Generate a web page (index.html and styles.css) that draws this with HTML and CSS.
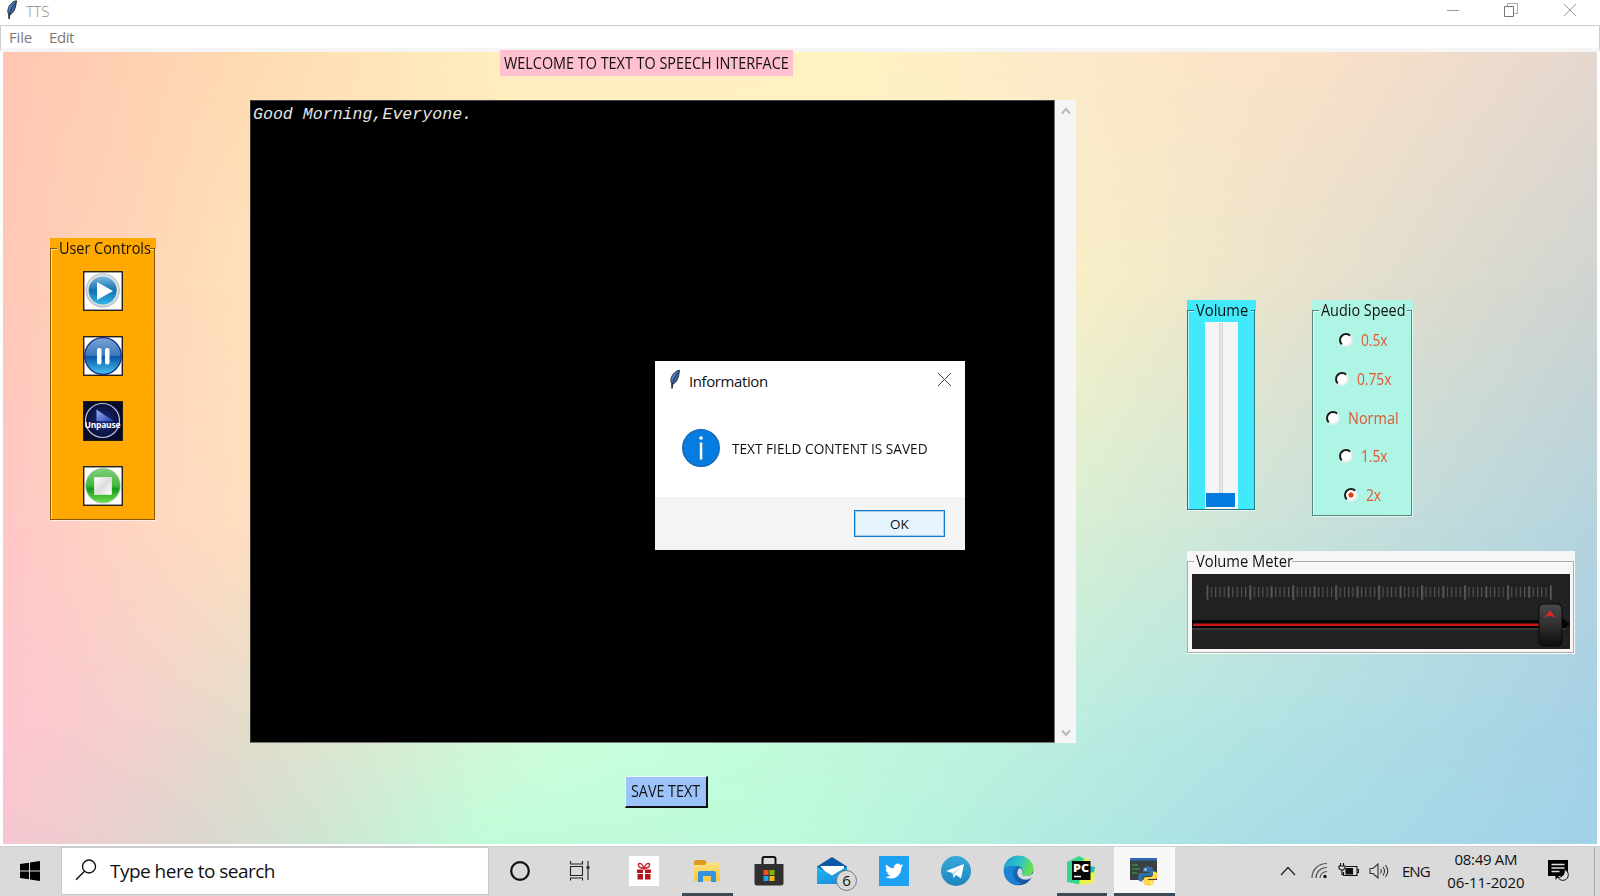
FILE: index.html
```html
<!DOCTYPE html>
<html lang="en">
<head>
<meta charset="utf-8">
<title>TTS</title>
<link rel="stylesheet" href="styles.css">
</head>
<body>
<svg class="defs" width="0" height="0">
  <defs>
    <linearGradient id="feather" x1="0" y1="0" x2="1" y2="1"><stop offset="0" stop-color="#7fb0e8"/><stop offset=".5" stop-color="#3d6ba8"/><stop offset="1" stop-color="#16263f"/></linearGradient>
    <linearGradient id="blueBtn" x1="0" y1="0" x2="0" y2="1"><stop offset="0" stop-color="#7db8dc"/><stop offset=".5" stop-color="#1272b4"/><stop offset="1" stop-color="#33b5e6"/></linearGradient>
    <linearGradient id="pauseBtn" x1="0" y1="0" x2="0" y2="1"><stop offset="0" stop-color="#7ba6d8"/><stop offset=".48" stop-color="#3c78bb"/><stop offset=".52" stop-color="#0c57a4"/><stop offset="1" stop-color="#43c6f2"/></linearGradient>
    <linearGradient id="stopBtn" x1="0" y1="0" x2="0" y2="1"><stop offset="0" stop-color="#7fd07c"/><stop offset=".5" stop-color="#46b83c"/><stop offset=".6" stop-color="#159a18"/><stop offset="1" stop-color="#6be04d"/></linearGradient>
    <linearGradient id="stopSq" x1="0" y1="0" x2="1" y2="1"><stop offset="0" stop-color="#fff"/><stop offset=".5" stop-color="#dcdcdc"/><stop offset="1" stop-color="#fff"/></linearGradient>
    <radialGradient id="navy"><stop offset="0" stop-color="#1b2f86"/><stop offset="1" stop-color="#070b2c"/></radialGradient>
    <linearGradient id="navyTri" x1="0" y1="0" x2="1" y2="1"><stop offset="0" stop-color="#9db4f0"/><stop offset="1" stop-color="#2344b0"/></linearGradient>
    <linearGradient id="tg" x1="0" y1="0" x2="0" y2="1"><stop offset="0" stop-color="#38a9dc"/><stop offset="1" stop-color="#1c85bd"/></linearGradient>
    <linearGradient id="edgeTop" x1="0" y1=".2" x2="1" y2=".5"><stop offset="0" stop-color="#1d9bd8"/><stop offset=".5" stop-color="#2fc3c9"/><stop offset="1" stop-color="#6be24d"/></linearGradient>
    <linearGradient id="edgeLow" x1="0" y1="0" x2="1" y2="1"><stop offset="0" stop-color="#1c86d6"/><stop offset="1" stop-color="#104a98"/></linearGradient>
    <linearGradient id="mailBody" x1="0" y1="0" x2="1" y2="1"><stop offset="0" stop-color="#25b6f0"/><stop offset="1" stop-color="#1287dc"/></linearGradient>
    <linearGradient id="folder" x1="0" y1="0" x2="0" y2="1"><stop offset="0" stop-color="#ffe187"/><stop offset="1" stop-color="#fbc638"/></linearGradient>
    <linearGradient id="knob" x1="0" y1="0" x2="0" y2="1"><stop offset="0" stop-color="#4a4a4a"/><stop offset=".5" stop-color="#303030"/><stop offset="1" stop-color="#0c0c0c"/></linearGradient>
    <pattern id="ticks" width="4.28" height="14" patternUnits="userSpaceOnUse"><rect width="1.1" height="10" y="2" fill="#555"/></pattern>
    <pattern id="bigTicks" width="42.85" height="16" patternUnits="userSpaceOnUse"><rect width="1.5" height="15" fill="#5e5e5e"/><rect x="21.4" y="1" width="1.4" height="12" fill="#5a5a5a"/></pattern>
    <symbol id="tkFeather" viewBox="0 0 12 20"><path d="M10.5.8C7 1.2 3 4.500 2 9.500c-.4 2 0 3.500.6 4.500L3 19l1-4.600C8 13 9.700 8 10.500.8z" fill="url(#feather)" stroke="#17202e" stroke-width=".9"/><path d="M9 3.500C6 6.500 4.200 10.500 3.500 15" fill="none" stroke="#1a2740" stroke-width=".9"/></symbol>
  </defs>
</svg>

<header class="titlebar">
  <svg class="title-icon" width="12" height="20"><use href="#tkFeather"/></svg>
  <span class="title-text">TTS</span>
  <div class="win-buttons">
    <svg width="14" height="14" viewBox="0 0 14 14"><path d="M1 7.500h12" stroke="#999"/></svg>
    <svg width="14" height="14" viewBox="0 0 14 14" fill="none" stroke="#777"><path d="M.5 3.500h9v10h-9z"/><path d="M3.500 3V.5h10v10H10" stroke="#aaa"/></svg>
    <svg width="14" height="14" viewBox="0 0 14 14"><path d="M1 1l12 12M13 1L1 13" stroke="#999"/></svg>
  </div>
</header>
<nav class="menubar"><span class="m-file">File</span><span class="m-edit">Edit</span></nav>

<main class="canvas">
  <div class="bg bg-1"></div><div class="bg bg-2"></div><div class="bg bg-3"></div><div class="bg bg-4"></div><div class="bg bg-5"></div>

  <section class="col-left">
    <div class="frame controls">
      <div class="frame-line"><div class="legend"><span class="t-controls">User Controls</span></div>
        <div class="buttons">
          <svg width="40" height="40" viewBox="0 0 40 40"><rect x=".75" y=".75" width="38.500" height="38.500" fill="#fff" stroke="#111" stroke-width="1.300"/><circle cx="19.700" cy="19.500" r="17.300" fill="#c4c9cd"/><circle cx="19.700" cy="19" r="15.500" fill="#dfe4e7"/><circle cx="19.700" cy="19.500" r="14" fill="url(#blueBtn)"/><path d="M14 11v18l16-9z" fill="#fff"/></svg>
          <svg width="40" height="40" viewBox="0 0 40 40"><rect x=".75" y=".75" width="38.500" height="38.500" fill="#fff" stroke="#111" stroke-width="1.300"/><circle cx="20" cy="20" r="18.300" fill="url(#pauseBtn)" stroke="#1b2d8c" stroke-width="1.300"/><rect x="14" y="12" width="4.500" height="16.500" rx="2" fill="#fff"/><rect x="22" y="12" width="4.500" height="16.500" rx="2" fill="#fff"/></svg>
          <svg width="40" height="40" viewBox="0 0 40 40"><rect x=".75" y=".75" width="38.500" height="38.500" fill="url(#navy)" stroke="#111" stroke-width="1.300"/><circle cx="19.500" cy="19.500" r="17" fill="none" stroke="#b9c0d8" stroke-width="1.200"/><path d="M13.500 8.500v11.500h17z" fill="url(#navyTri)"/><text x="1.500" y="26.500" textLength="36" class="unpause">Unpause</text></svg>
          <svg width="40" height="40" viewBox="0 0 40 40"><rect x=".75" y=".75" width="38.500" height="38.500" fill="#fff" stroke="#111" stroke-width="1.300"/><circle cx="20" cy="19.700" r="17.800" fill="#bccabc"/><circle cx="20" cy="19.500" r="17" fill="url(#stopBtn)"/><rect x="11.500" y="11.500" width="17" height="17" fill="url(#stopSq)" stroke="#eee" stroke-width=".7"/></svg>
        </div>
      </div>
    </div>
  </section>

  <section class="col-mid">
    <div class="welcome"><span class="t-welcome">WELCOME TO TEXT TO SPEECH INTERFACE</span></div>
    <div class="editor">
      <div class="text-area">Good Morning,Everyone.</div>
      <div class="scrollbar">
        <svg width="12" height="10" viewBox="0 0 12 10"><path d="M2 7.500L6 3l4 4.500" fill="none" stroke="#b9b9b9" stroke-width="2"/></svg>
        <svg width="12" height="10" viewBox="0 0 12 10"><path d="M2 2.500L6 7l4-4.500" fill="none" stroke="#b9b9b9" stroke-width="2"/></svg>
      </div>
    </div>
    <div class="save"><span class="t-save">SAVE TEXT</span></div>
  </section>

  <section class="col-right">
    <div class="row">
      <div class="frame volume">
        <div class="frame-line"><div class="legend"><span class="t-volume">Volume</span></div>
          <div class="scale"><div class="trough"></div><div class="thumb"></div></div>
        </div>
      </div>
      <div class="frame speed">
        <div class="frame-line"><div class="legend"><span class="t-speed">Audio Speed</span></div>
          <div class="options">
            <div class="opt o1"><i></i><span>0.5x</span></div>
            <div class="opt o2"><i></i><span>0.75x</span></div>
            <div class="opt o3"><i></i><span>Normal</span></div>
            <div class="opt o4"><i></i><span>1.5x</span></div>
            <div class="opt o5"><i class="on"></i><span>2x</span></div>
          </div>
        </div>
      </div>
    </div>
    <div class="frame meter">
      <div class="frame-line"><div class="legend"><span class="t-meter">Volume Meter</span></div>
        <svg class="meter-img" width="378" height="75" viewBox="0 0 377 75" preserveAspectRatio="none">
          <rect width="377" height="75" fill="#222122"/>
          <g transform="translate(14.500 11)"><rect width="344.500" height="14" fill="url(#ticks)"/><rect width="344.500" height="15" fill="url(#bigTicks)"/></g>
          <rect y="46" width="372" height="8" fill="#050404"/><path d="M369 44l8 6-8 6z" fill="#050404"/>
          <rect y="54" width="372" height="2" fill="#383838"/>
          <rect x="1" y="49.500" width="346" height="2.500" fill="#cb1517"/>
          <rect x="346" y="30" width="23" height="42" rx="5" fill="url(#knob)" stroke="#0a0a0a"/>
          <path d="M353 42.500l4-5.500 4 5.500-4-1.500z" fill="#e32424" stroke="#e32424"/>
        </svg>
      </div>
    </div>
  </section>
</main>

<div class="dialog">
  <div class="dlg-title">
    <svg width="12" height="21"><use href="#tkFeather"/></svg>
    <span class="t-info">Information</span>
    <svg class="dlg-close" width="15" height="15" viewBox="0 0 15 15"><path d="M1 1l13 13M14 1L1 14" stroke="#444" stroke-width="1"/></svg>
  </div>
  <div class="dlg-body">
    <svg width="38" height="38" viewBox="0 0 38 38"><circle cx="19" cy="19" r="18.300" fill="#047ce0" stroke="#1468b4" stroke-width="1.300"/><rect x="17.800" y="13.500" width="2.500" height="17" fill="#fff"/><circle cx="19" cy="9" r="1.800" fill="#fff"/></svg>
    <span class="t-msg">TEXT FIELD CONTENT IS SAVED</span>
  </div>
  <div class="dlg-foot"><div class="ok"><span>OK</span></div></div>
</div>

<footer class="taskbar">
  <div class="start"><svg width="20" height="20" viewBox="0 0 20 20"><path d="M0 3l9-1.300V9.500H0zM10 1.500L20 0v9.500H10zM0 10.500h9v7.800L0 17zM10 10.500h10V20l-10-1.500z"/></svg></div>
  <div class="search">
    <svg width="22" height="22" viewBox="0 0 22 22" fill="none" stroke="#111" stroke-width="1.400"><circle cx="14" cy="7.500" r="6.500"/><path d="M9.500 12.200L1 20.700"/></svg>
    <span class="t-search">Type here to search</span>
  </div>
  <div class="apps">
    <div class="app"><svg width="22" height="22"><circle cx="11" cy="11" r="8.800" fill="none" stroke="#111" stroke-width="2.200"/></svg></div>
    <div class="app"><svg class="taskview" width="22" height="22" viewBox="0 0 22 22" fill="none" stroke="#222" stroke-width="1.100"><path d="M1.500 1v3h12V1M1.500 6.500h12v9h-12zM1.500 20.500V18h12v2.500M19 1v19"/><path d="M17.500 7.500h3" stroke-width="2.500"/></svg></div>
    <div class="app"><svg width="30" height="30" viewBox="0 0 30 30"><rect width="30" height="30" fill="#fff"/><path d="M8 13.500h6v3.500H8zM16 13.500h6v3.500h-6zM8.500 18h5.500v5.500H8.500zM16 18h5.500v5.500H16z" fill="#b3151b"/><path d="M15 12.500c-4-.5-6-2-5.500-4s4-1.500 5.500 4c1.500-5.500 5-6 5.500-4s-1.500 3.500-5.500 4z" fill="none" stroke="#c3242a" stroke-width="1.400"/></svg></div>
    <div class="app run"><svg width="28" height="26" viewBox="0 0 28 26"><path d="M1 4q0-2 2-2h9l2 3-2 2H1z" fill="#dc9c1b"/><path d="M1 7h11l2-2.500h13V23H1z" fill="url(#folder)"/><path d="M5 24V15q0-2 2-2h14q2 0 2 2v9h-5v-6h-8v6z" fill="#3493dc"/></svg></div>
    <div class="app"><svg width="30" height="32" viewBox="0 0 30 32"><path d="M8.500 9V4q0-2 2-2h9q2 0 2 2v5" fill="none" stroke="#111" stroke-width="2"/><path d="M.5 9h29v19q0 2.500-2.500 2.500H3Q.5 30.500.5 28z" fill="#303030"/><path d="M9.500 15h5v5h-5z" fill="#f25022"/><path d="M15.500 15h5v5h-5z" fill="#7fba00"/><path d="M9.500 21h5v5h-5z" fill="#21a4ef"/><path d="M15.500 21h5v5h-5z" fill="#ffb900"/></svg></div>
    <div class="app mail"><svg width="30" height="29" viewBox="0 0 30 29"><path d="M0 10.500L15 1l15 9.500V17H0z" fill="#0b58a8"/><path d="M3 10h24v8l-12 5z" fill="#fff"/><path d="M0 10.500l15 9 15-9V28H0z" fill="url(#mailBody)"/></svg><span class="badge">6</span></div>
    <div class="app"><svg width="30" height="30" viewBox="0 0 30 30"><rect width="30" height="30" fill="#1da1f2"/><path transform="translate(6 6) scale(.76)" fill="#fff" d="M23.950 4.570a10 10 0 01-2.820.77 4.960 4.960 0 002.160-2.720c-.95.550-2 .950-3.130 1.180a4.920 4.920 0 00-8.380 4.480C7.690 8.100 4.070 6.130 1.640 3.160a4.820 4.820 0 00-.67 2.480c0 1.710.87 3.210 2.190 4.100a4.900 4.900 0 01-2.230-.61v.06a4.920 4.920 0 003.950 4.830 4.990 4.990 0 01-2.210.08 4.940 4.940 0 004.600 3.420A9.870 9.870 0 010 19.540a13.990 13.990 0 007.550 2.210c9.050 0 14-7.500 14-13.980 0-.21 0-.42-.02-.63a9.940 9.940 0 002.460-2.550z"/></svg></div>
    <div class="app"><svg width="30" height="30" viewBox="0 0 30 30"><circle cx="15" cy="15" r="15" fill="url(#tg)"/><path d="M5 15L23 8l-3 14.500-5-3.500-2.500 3-1-5z" fill="#fff"/><path d="M11.500 17L20 11l-7 7-.5 4z" fill="#b9d6e8"/></svg></div>
    <div class="app"><svg width="31" height="31" viewBox="0 0 31 31"><circle cx="15.500" cy="15.500" r="14.800" fill="url(#edgeLow)"/><path d="M.7 15C1 6 7.500.7 15.500.7 24 .7 30.500 7 30.500 13.500c0 5-4 7.500-8 7.500-3 0-4.500-1-3.500-2.500 2-3 0-7.500-5-7.500C7 11 2 12 .7 15z" fill="url(#edgeTop)"/><path d="M13 12c-6 5-3 15 6 16.500-9 4-18-3-18-13 2-5 8-6 12-3.500z" fill="#1a83d3"/><path d="M17 13c-4 2-4 10 4 11.500 3 .5 6-.5 8.500-2.500l2-3V17l-4 3c-4 2-9 1-8.500-1.500 1-2 .500-4-2-5.500z" fill="#dadada"/></svg></div>
    <div class="app run"><svg width="30" height="31" viewBox="0 0 30 31"><path d="M1 7L13 1l8 4-5 25-15-3z" fill="#38d58e"/><path d="M16 6l6-4 3 9 4 1-1 16-15 2z" fill="#e9f54a"/><path d="M24 11l5 1-1 5-4 1z" fill="#19b9d5"/><rect x="6" y="6" width="18.500" height="19" fill="#080808"/><text x="7" y="16.500" class="pc" textLength="16" lengthAdjust="spacingAndGlyphs">PC</text><path d="M8 21.500h7" stroke="#fff" stroke-width="1.500"/></svg></div>
    <div class="app run active"><svg width="30" height="30" viewBox="0 0 30 30"><rect x="1" y="2" width="27" height="22" fill="#3b4042"/><rect x="1" y="2" width="27" height="2.500" fill="#2b6cb5"/><path d="M3 9h6M3 13h8M3 17h5" stroke="#3d8b3d" stroke-width="1.300"/><path d="M19 10.500c-4 0-5 1-5 3v2.500h6v1h-8c-2 0-3 2-3 4.500s1 4 3 4h1.500V23c0-2 1-3 3-3h5c1.500 0 2.500-1 2.500-2.500v-4c0-2-1.500-3-5-3z" fill="#346fa5"/><path d="M20 29.500c4 0 5-1 5-3V24h-6v-1h7c2 0 2.500-2 2.500-3.500s-1-4-3-4H24V18c0 2-1 3-3 3h-4c-1.500 0-2.500 1-2.500 2.500v3c0 2 1.500 3 5.500 3z" fill="#ffd747"/><circle cx="16.500" cy="13.500" r="1" fill="#fff"/><circle cx="22.500" cy="26.500" r="1" fill="#fff"/></svg></div>
  </div>
  <div class="tray">
    <svg class="chev" width="16" height="10" viewBox="0 0 16 10"><path d="M1 9l7-7.500L15 9" fill="none" stroke="#222" stroke-width="1.200"/></svg>
    <svg class="wifi" width="17" height="17" viewBox="0 0 17 17" fill="none" stroke="#555" stroke-width="1.200"><path d="M1 16C1 8 7 1.500 16 1.500M5 16c0-6 4.500-10.500 11-10.500M9 16c0-3.500 3-6.500 7-6.500"/><circle cx="14" cy="14.500" r="1.700" fill="#111" stroke="none"/></svg>
    <svg class="batt" width="21" height="16" viewBox="0 0 21 16" fill="none" stroke="#111" stroke-width="1.100"><path d="M8 3.500h11v9H5.500V9M19.500 6.500h1v3h-1"/><path d="M8 5.500h6.500V11H8z" fill="#111"/><path d="M2.500 0v3M5.500 0v3M1 3h6v2.500L5 7H3L1 5.500zM4 7v4.500h2"/></svg>
    <svg class="vol" width="20" height="16" viewBox="0 0 20 16" fill="none" stroke="#333" stroke-width="1.100"><path d="M1 5.500h3L9 1v14l-5-4.500H1zM11.500 6q1.500 2 0 4.500M14 4q3 4 0 8.500M16.500 2q4.500 6 0 12"/></svg>
    <span class="lang">ENG</span>
    <div class="clock"><span>08:49 AM</span><span class="date">06-11-2020</span></div>
    <svg class="note" width="21" height="21" viewBox="0 0 21 21"><path d="M0 0h20v16h-9l-3.500 4v-4H0z"/><path d="M3.500 4.500h13M3.500 8h13M3.500 11.500h8" stroke="#ddd" stroke-width="1.300"/><path d="M16 9.500a5.500 5.500 0 11-6 8 6 6 0 006-8z" fill="#ddd" stroke="#111"/></svg>
  </div>
</footer>
</body>
</html>
```
FILE: styles.css
```css
* { box-sizing: border-box; }
body { margin: 0; width: 1600px; height: 896px; overflow: hidden; background: #fff; display: flex; flex-direction: column; font-family: "Open Sans", "Noto Sans", sans-serif; color: #111; }
svg { display: block; flex: none; }
.defs { position: absolute; }
span { white-space: nowrap; }

.titlebar { height: 26px; flex: none; border-bottom: 1px solid #ccc; display: flex; align-items: center; padding: 0 23px 5px 6px; }
.title-text { margin-left: 8px; font-size: 15px; color: #8d8d8d; letter-spacing: -.3px; padding-top: 1px; font-weight: 300; }
.win-buttons { margin-left: auto; display: flex; gap: 44px; }
.win-buttons svg:nth-child(-n+2) { transform: translateX(-1px); }
.menubar { height: 26px; flex: none; display: flex; gap: 17px; padding-left: 8px; font-size: 15px; line-height: 22px; color: #7a7a7a; border-left: 1px solid #ccc; border-right: 1px solid #ccc; border-bottom: 4px solid #f5f5f5; }
.m-file { letter-spacing: -.2px; }
.m-edit { letter-spacing: -.4px; }

.canvas { height: 792px; flex: none; margin: 0 3px; display: grid; grid-template-columns: 247px 826px 1fr; position: relative; isolation: isolate; }
/* Horizontal colour bands, blended into each other vertically by masks */
.bg { position: absolute; inset: 0; z-index: -1; }
.bg-1 { background: linear-gradient(90deg, #ffc6b2, #ffdab2 15%, #fff0c0 32%, #fff3c2 53%, #fdeaca 66%, #fbe1c8 82%, #e6d8cf); }
.bg-2 { background: linear-gradient(90deg, #ffc8b8, #ffd8b8 10%, #ffe2bc 16%, #f8efc8 67%, #e8e2cc 81%, #cfd4d1); mask: linear-gradient(transparent, #000 30%); }
.bg-3 { background: linear-gradient(90deg, #ffc7c5, #ffd5c2 8%, #ffdfc0 16%, #d8efd4 67%, #cbe3da 80%, #b4d3de); mask: linear-gradient(transparent 30%, #000 60%); }
.bg-4 { background: linear-gradient(90deg, #ffc6d0, #f5d0cd 8%, #e4dccb 15%, #ceffdc 35%, #c2fedb 46%, #bdeee0 66%, #b7e9e2 72%, #afdee4 85%, #a6d1e6); mask: linear-gradient(transparent 60%, #000 85%); }
.bg-5 { background: linear-gradient(90deg, #f6c6d0, #dfd3cf 10%, #cee5d2 20%, #c0fcd8 30%, #bcfadb 50%, #b0ebe0 65%, #a8dce6 80%, #a2d1e8); mask: linear-gradient(transparent 85%, #000); }

.frame { padding-top: 10px; font-size: 16px; }
.frame-line { border: 1px solid #0007; box-shadow: inset 1px 1px #fff9, 1px 1px #fff9; }
.legend { height: 20px; line-height: 19px; margin: -10px 0 0 6px; position: relative; }
.legend span { display: inline-block; transform-origin: 0 50%; transform: scaleX(.92); margin-left: 2px; }

.col-left { padding: 186px 0 0 47px; }
.controls { width: 106px; height: 282px; background: #ffa800; }
.controls .frame-line { height: 272px; width: 105px; }
.controls .legend { background: #ffa800; width: 93px; }
.controls .t-controls { transform: scaleX(.9); }
.buttons { display: flex; flex-direction: column; gap: 25px; padding: 12px 0 0 32px; }
.unpause { font: 700 8.5px "Open Sans", sans-serif; fill: #fff; }

.col-mid { display: flex; flex-direction: column; align-items: flex-start; }
.welcome { margin: -2px 0 24px 250px; width: 293px; height: 26px; background: #ffc0cf; font-size: 16px; line-height: 26px; padding-left: 4px; }
.t-welcome { display: inline-block; transform: scaleX(.9); transform-origin: 0 50%; }
.editor { display: flex; width: 826px; height: 643px; }
.text-area { width: 805px; background: #000; border: 1px solid #777; border-top-color: #444; border-left-color: #333; color: #e6e6e6; font: italic 16.600px/20px "Liberation Mono", monospace; padding: 4px 2px; }
.scrollbar { width: 21px; background: #f5f5f5; display: flex; flex-direction: column; justify-content: space-between; align-items: center; padding: 6px 0 5px; }
.save { margin: 33px 0 0 375px; width: 83px; height: 32px; background: #9cc3fa; border: 1px solid #e8f4ff; border-right: 2px solid #111; border-bottom: 2px solid #111; font-size: 16px; line-height: 29px; padding-left: 5px; }
.t-save { display: inline-block; transform: scaleX(.895); transform-origin: 0 50%; }

.col-right { padding: 248px 0 0 111px; }
.row { display: flex; align-items: flex-start; gap: 56px; height: 251px; }
.volume { width: 69px; height: 210px; background: #41e9fb; }
.volume .frame-line { height: 200px; width: 68px; }
.volume .legend { background: #41e9fb; width: 57px; }
.scale { width: 33px; height: 187px; margin: 1px 0 0 17px; background: #f5f5f5; padding-top: 1px; }
.trough { width: 4px; height: 170px; margin-left: 14px; border: 1px solid #d5d5d5; background: #e7e7e7; }
.thumb { width: 29px; height: 14px; margin-left: 1px; background: #047bdf; }
.speed { width: 101px; height: 217px; background: #aff5e5; }
.speed .frame-line { width: 100px; height: 206px; }
.speed .legend { background: #aff5e5; width: 88px; }
.speed .t-speed { transform: scaleX(.9); }
.options { padding-top: 0; }
.opt { display: flex; align-items: center; gap: 8px; height: 38.700px; color: #e4552f; }
.opt i { width: 14px; height: 14px; border-radius: 50%; background: #fff; border: 2px solid; border-color: #1a1a1a #e4efec #e4efec #1a1a1a; }
.opt i.on { background: radial-gradient(circle, #f03c14 2.200px, #fff 3px); }
.opt span { font-size: 16px; transform: scaleX(.86); transform-origin: 0 50%; }
.o1, .o4 { padding-left: 26px; }
.o2 { padding-left: 22px; }
.o3 { padding-left: 13px; }
.opt.o3 span { transform: scaleX(.905); }
.o5 { padding-left: 31px; }
.meter { width: 388px; height: 103px; background: #f6f6f6; }
.meter .frame-line { height: 92px; width: 387px; border-color: #aaa; }
.meter .legend { background: #f6f6f6; width: 98px; }
.meter-img { margin: 2px 0 0 4px; }

.dialog { position: absolute; left: 655px; top: 361px; width: 310px; height: 189px; background: #fff; display: flex; flex-direction: column; }
.dlg-title { display: flex; align-items: center; height: 37px; padding: 0 13px 0 14px; }
.t-info { font-size: 15px; margin-left: 8px; letter-spacing: -.4px; padding-top: 2px; }
.dlg-close { margin-left: auto; }
.dlg-body { height: 99px; display: flex; align-items: center; padding: 1px 0 0 27px; }
.t-msg { margin-left: 12px; font-size: 14px; display: inline-block; transform: scaleX(.975); transform-origin: 0 50%; padding-top: 1px; }
.dlg-foot { flex: 1; background: #f4f4f4; display: flex; justify-content: flex-end; padding: 13px 20px 0 0; }
.ok { width: 91px; height: 27px; border: 1px solid #1479c9; background: #e6f5fd; font-size: 13.500px; line-height: 26px; text-align: center; box-shadow: inset 0 0 0 1px #5ca9dd80; }

.taskbar { height: 50px; margin-top: 2px; flex: none; background: #dadada; display: flex; align-items: flex-start; border-top: 1px solid #d0d0d0; }
.start { width: 61px; padding: 14px 0 0 20px; }
.search { width: 428px; height: 48px; background: #fff; border: 1px solid #c9c9c9; display: flex; align-items: center; padding: 0 0 2px 13px; }
.t-search { margin-left: 13px; font-size: 19px; letter-spacing: -.52px; padding-top: 2px; }
.apps { display: flex; height: 49px; }
.app { width: 62.400px; display: flex; align-items: center; justify-content: center; position: relative; padding: 0 1px 2px 0; }
.run::after { content: ""; position: absolute; bottom: 0; left: 6px; right: 6px; height: 3px; background: #3d4b57; }
.active { background: #f8f8f8; margin-left: 1px; width: 61px; }
.active::after { left: 0; right: 0; }
.taskview { margin-left: -4px; }
.badge { position: absolute; top: 23px; left: 35px; width: 21px; height: 21px; border-radius: 50%; border: 1px solid #777; background: #d9d9d9; font-size: 15px; line-height: 19px; text-align: center; }
.pc { font: 800 11px "Open Sans", sans-serif; fill: #fff; }
.tray { flex: 1; display: flex; align-items: center; height: 49px; padding: 0 0 2px 105px; margin-right: 5px; border-right: 1px solid #aaa; }
.wifi { margin-left: 15px; }
.batt { margin-left: 10px; }
.vol { margin-left: 10px; }
.lang { margin-left: 13px; font-size: 15px; letter-spacing: -.9px; width: 28px; }
.clock { margin-left: 17px; width: 78px; display: flex; flex-direction: column; align-items: center; font-size: 15px; line-height: 23px; letter-spacing: -.3px; }
.date { letter-spacing: -.1px; }
.note { margin-left: 23px; }
```
